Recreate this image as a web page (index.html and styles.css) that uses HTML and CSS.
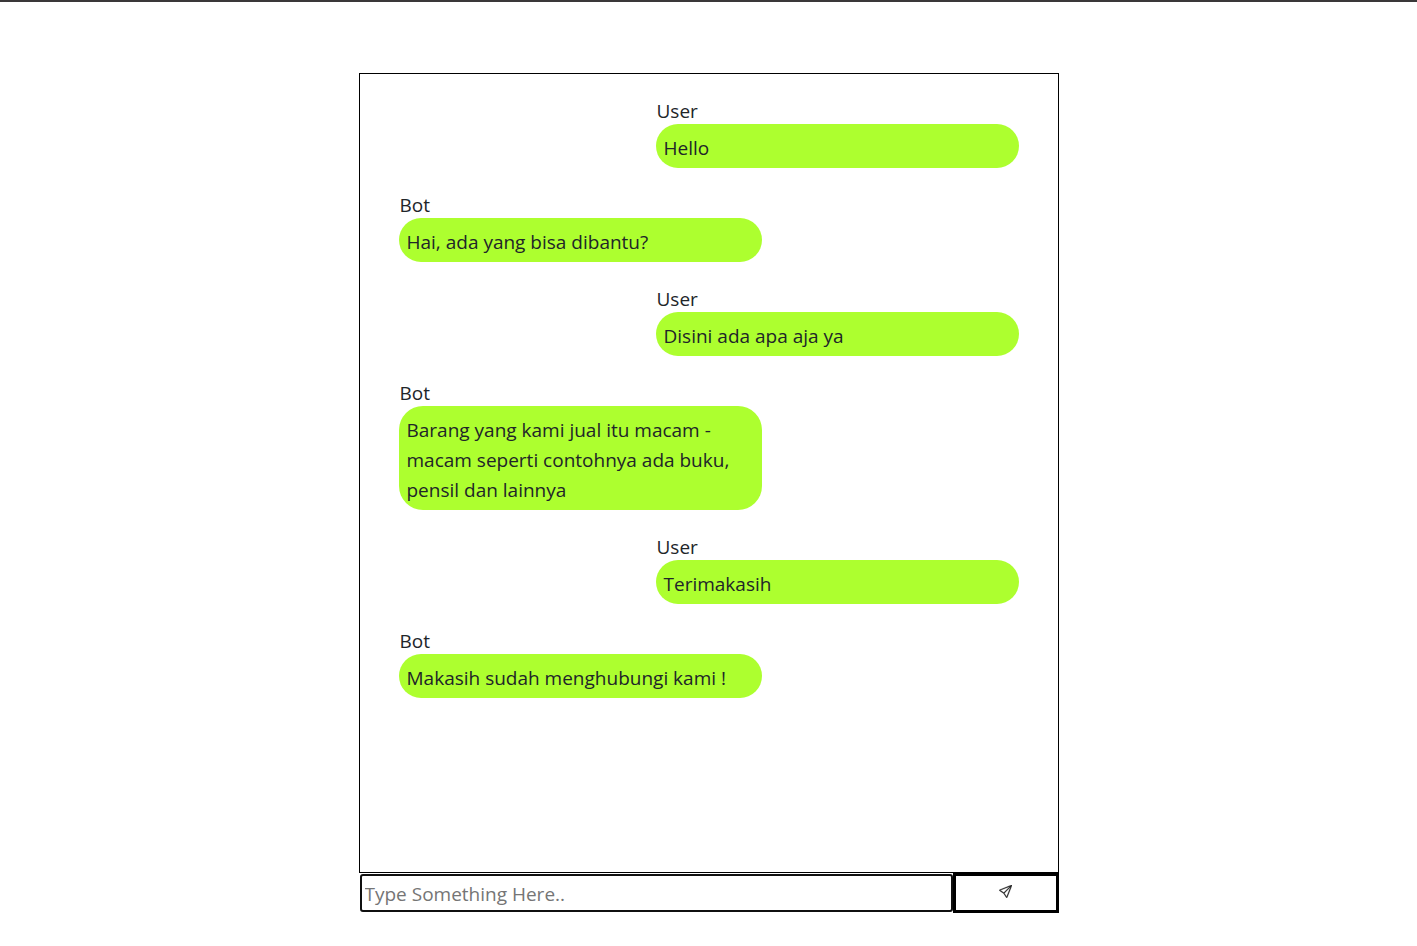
FILE: index.html
```html
<!DOCTYPE html>
<html lang="id">
<head>
<meta charset="utf-8">
<title>Chat</title>
<link rel="stylesheet" href="styles.css">
</head>
<body>
<main class="chat">
  <section class="messages">
    <article class="message user"><div class="sender">User</div><p class="bubble">Hello</p></article>
    <article class="message"><div class="sender">Bot</div><p class="bubble">Hai, ada yang bisa dibantu?</p></article>
    <article class="message user"><div class="sender">User</div><p class="bubble">Disini ada apa aja ya</p></article>
    <article class="message"><div class="sender">Bot</div><p class="bubble">Barang yang kami jual itu macam - macam seperti contohnya ada buku, pensil dan lainnya</p></article>
    <article class="message user"><div class="sender">User</div><p class="bubble">Terimakasih</p></article>
    <article class="message"><div class="sender">Bot</div><p class="bubble">Makasih sudah menghubungi kami !</p></article>
  </section>
  <form class="composer">
    <input class="field" type="text" placeholder="Type Something Here.." aria-label="Message">
    <button class="send" type="button" aria-label="Send">
      <svg class="icon" viewBox="0 0 16 16" fill="currentColor" stroke="currentColor" stroke-width="0.4" aria-hidden="true"><path d="M15.854.146a.5.5 0 0 1 .11.54l-5.819 14.547a.75.75 0 0 1-1.329.124l-3.178-4.995L.643 7.184a.75.75 0 0 1 .124-1.33L15.314.037a.5.5 0 0 1 .54.11ZM6.636 10.07l2.761 4.338L14.13 2.576 6.636 10.07Zm6.787-8.201L1.591 6.602l4.339 2.76 7.494-7.493Z"/></svg>
    </button>
  </form>
</main>
</body>
</html>
```
FILE: styles.css
```css
* { box-sizing: border-box; }
body {
  margin: 0;
  border-top: 2px solid #3a3839;
  background: #fff;
  color: #212529;
  font-family: "Open Sans", "Noto Sans", sans-serif;
  font-size: 19px;
  line-height: 30px;
}
.chat {
  width: 700px;
  max-width: 100%;
  margin: 71px auto 0;
}
.messages {
  display: flex;
  flex-direction: column;
  gap: 24px;
  min-height: 800px;
  padding: 24px 39px;
  border: 1px solid #000;
}
.message { width: 363px; max-width: 100%; }
.user { align-self: flex-end; }
.sender {
  padding-left: 1px;
  line-height: 26px;
}
.bubble {
  margin: 0;
  padding: 9px 8px 5px;
  border-radius: 24px;
  background: #adff2f;
}
.composer {
  display: flex;
  height: 40px;
  padding-left: 1px;
}
.field {
  flex: 1;
  min-width: 0;
  height: 38px;
  margin-top: 1px;
  padding: 4px 3px 2px;
  border: 2px solid #101010;
  border-radius: 3px;
  background: #fff;
  color: inherit;
  font: inherit;
}
.field::placeholder { color: #757575; opacity: 1; }
.send {
  width: 106px;
  height: 40px;
  padding: 0;
  border: 3px solid #000;
  background: #fff;
  color: #222;
}
.icon { width: 13px; height: 13px; }
```
